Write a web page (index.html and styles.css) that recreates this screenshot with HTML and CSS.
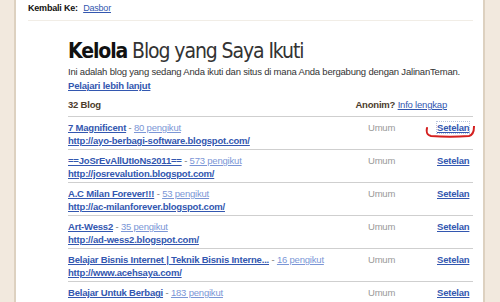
FILE: index.html
```html
<!DOCTYPE html>
<html lang="id">
<head>
    <meta charset="UTF-8">
    <title>Kelola Blog yang Saya Ikuti</title>
    <link rel="stylesheet" href="styles.css">
</head>
<body>
    <div class="page">
        <div class="topbar">
            <b>Kembali Ke:</b> <a href="#">Dasbor</a>
        </div>

        <div class="content">
            <h1><b>Kelola</b> Blog yang Saya Ikuti</h1>
            <p class="intro">
                Ini adalah blog yang sedang Anda ikuti dan situs di mana Anda bergabung dengan JalinanTeman.
                <br><a class="strong" href="#">Pelajari lebih lanjut</a>
            </p>

            <div class="list-head">
                <span class="count">32 Blog</span>
                <span><b>Anonim?</b> <a href="#">Info lengkap</a></span>
            </div>

            <div class="row">
                <div class="blog">
                    <div><a class="strong" href="#">7 Magnificent</a> <span class="dash">-</span> <a class="light" href="#">80 pengikut</a></div>
                    <div><a class="strong" href="#">http://ayo-berbagi-software.blogspot.com/</a></div>
                </div>
                <div class="type">Umum</div>
                <div class="action">
                    <a class="strong focus" href="#">Setelan</a>
                    <svg class="mark" width="54" height="16" viewBox="0 0 54 16">
                        <path d="M2 2 C1 7 2 9 6 10 C18 11 32 11 44 10 C48 9 49 6 49 0.5" fill="none" stroke="#d42020" stroke-width="2" stroke-linecap="round"/>
                    </svg>
                </div>
            </div>

            <div class="row">
                <div class="blog">
                    <div><a class="strong" href="#">==JoSrEvAllUtIoNs2011==</a> <span class="dash">-</span> <a class="light" href="#">573 pengikut</a></div>
                    <div><a class="strong" href="#">http://josrevalution.blogspot.com/</a></div>
                </div>
                <div class="type">Umum</div>
                <div class="action"><a class="strong" href="#">Setelan</a></div>
            </div>

            <div class="row">
                <div class="blog">
                    <div><a class="strong" href="#">A.C Milan Forever!!!</a> <span class="dash">-</span> <a class="light" href="#">53 pengikut</a></div>
                    <div><a class="strong" href="#">http://ac-milanforever.blogspot.com/</a></div>
                </div>
                <div class="type">Umum</div>
                <div class="action"><a class="strong" href="#">Setelan</a></div>
            </div>

            <div class="row">
                <div class="blog">
                    <div><a class="strong" href="#">Art-Wess2</a> <span class="dash">-</span> <a class="light" href="#">35 pengikut</a></div>
                    <div><a class="strong" href="#">http://ad-wess2.blogspot.com/</a></div>
                </div>
                <div class="type">Umum</div>
                <div class="action"><a class="strong" href="#">Setelan</a></div>
            </div>

            <div class="row">
                <div class="blog">
                    <div><a class="strong" href="#">Belajar Bisnis Internet | Teknik Bisnis Interne...</a> <span class="dash">-</span> <a class="light" href="#">16 pengikut</a></div>
                    <div><a class="strong" href="#">http://www.acehsaya.com/</a></div>
                </div>
                <div class="type">Umum</div>
                <div class="action"><a class="strong" href="#">Setelan</a></div>
            </div>

            <div class="row">
                <div class="blog">
                    <div><a class="strong" href="#">Belajar Untuk Berbagi</a> <span class="dash">-</span> <a class="light" href="#">183 pengikut</a></div>
                    <div><a class="strong" href="#">http://belajaruntukberbagi.blogspot.com/</a></div>
                </div>
                <div class="type">Umum</div>
                <div class="action"><a class="strong" href="#">Setelan</a></div>
            </div>
        </div>
    </div>
</body>
</html>
```

FILE: styles.css
```css
* {
    margin: 0;
    padding: 0;
    box-sizing: border-box;
}

html, body {
    height: 100%;
    overflow: hidden;
}

body {
    background: #f2e9de;
    font-family: "Liberation Sans", Arial, sans-serif;
    font-size: 9.5px;
    letter-spacing: -0.2px;
    color: #222;
}

a {
    color: #3357b0;
}

.page {
    margin: 0 15px 0 14px;
    min-height: 100%;
    background: #fff;
    border-left: 2px solid #ddd1c0;
    border-right: 2px solid #ddd1c0;
}

.topbar {
    margin: 0 10px 0 12px;
    padding: 2px 0 5px;
    font-size: 9px;
    line-height: 13px;
    border-bottom: 1px solid #f1ede6;
}

.topbar b {
    color: #111;
    margin-right: 3px;
}

.content {
    padding: 16px 10px 0 52px;
}

h1 {
    font-family: "DejaVu Sans Condensed", "DejaVu Sans", sans-serif;
    font-weight: normal;
    font-size: 21px;
    letter-spacing: -1.1px;
    line-height: 28px;
    color: #333;
}

h1 b {
    color: #111;
}

.intro {
    line-height: 14px;
    color: #333;
}

.strong {
    font-weight: bold;
}

.list-head {
    display: flex;
    justify-content: space-between;
    margin-top: 5px;
    padding: 0 26px 4px 0;
    line-height: 14px;
    color: #4c3c2c;
}

.count {
    font-weight: bold;
}

.row {
    display: flex;
    border-top: 1px solid #cfcfcf;
    padding: 4px 0 2px;
    line-height: 13px;
}

.blog {
    flex: 1;
    white-space: nowrap;
}

.dash {
    color: #777;
}

.light {
    color: #7b96d6;
}

.type {
    width: 69px;
    color: #999;
}

.action {
    position: relative;
    width: 36px;
}

.focus {
    outline: 1px dotted #b8c4dc;
}

.mark {
    position: absolute;
    left: -12px;
    top: 5px;
}
```
